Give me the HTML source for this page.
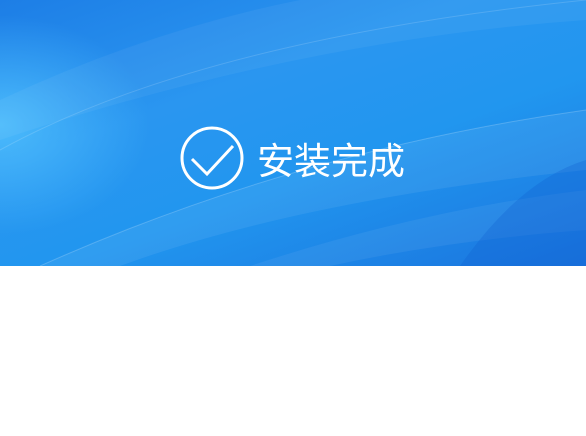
<!DOCTYPE html>
<html><head><meta charset="utf-8"><style>
html,body{margin:0;padding:0;width:586px;height:436px;overflow:hidden;background:#fff}
.top{position:absolute;left:0;top:0;width:586px;height:266px;background:linear-gradient(160deg,#1d7ee6 0%,#2a96f0 35%,#2196ef 60%,#1a74de 100%);overflow:hidden}
.t{position:absolute;left:257px;top:140px;font-family:"Liberation Sans","Noto Sans CJK SC",sans-serif;font-size:37px;color:#fff;line-height:44px}
</style></head><body>
<div class="top">
<svg width="586" height="266" style="position:absolute;left:0;top:0">
<defs><radialGradient id="g" cx="0.5" cy="0.5" r="0.5"><stop offset="0" stop-color="#55c6ff" stop-opacity=".8"/><stop offset="1" stop-color="#4fc0ff" stop-opacity="0"/></radialGradient></defs>
<ellipse cx="0" cy="125" rx="150" ry="110" fill="url(#g)"/>
<path d="M0 100 Q150 30 300 0 L586 0 L586 20 Q300 40 0 140Z" fill="#fff" opacity=".05"/>
<path d="M40 266 Q300 150 586 110 L586 170 Q300 200 120 266Z" fill="#fff" opacity=".07"/>
<path d="M250 266 Q420 210 586 190 L586 230 Q450 240 330 266Z" fill="#fff" opacity=".06"/>
<path d="M0 150 Q200 40 586 0" stroke="#fff" stroke-opacity=".15" fill="none"/>
<path d="M40 266 Q300 150 586 110" stroke="#fff" stroke-opacity=".2" fill="none"/>
<path d="M460 266 Q520 180 586 160 L586 266Z" fill="#0f5fcf" opacity=".3"/>
<circle cx="212" cy="158" r="30" fill="none" stroke="#fff" stroke-width="3"/>
<path d="M192 159 L207 174 L233 146" fill="none" stroke="#fff" stroke-width="3"/>
</svg>
<div class="t">安装完成</div>
</div>
</body></html>
